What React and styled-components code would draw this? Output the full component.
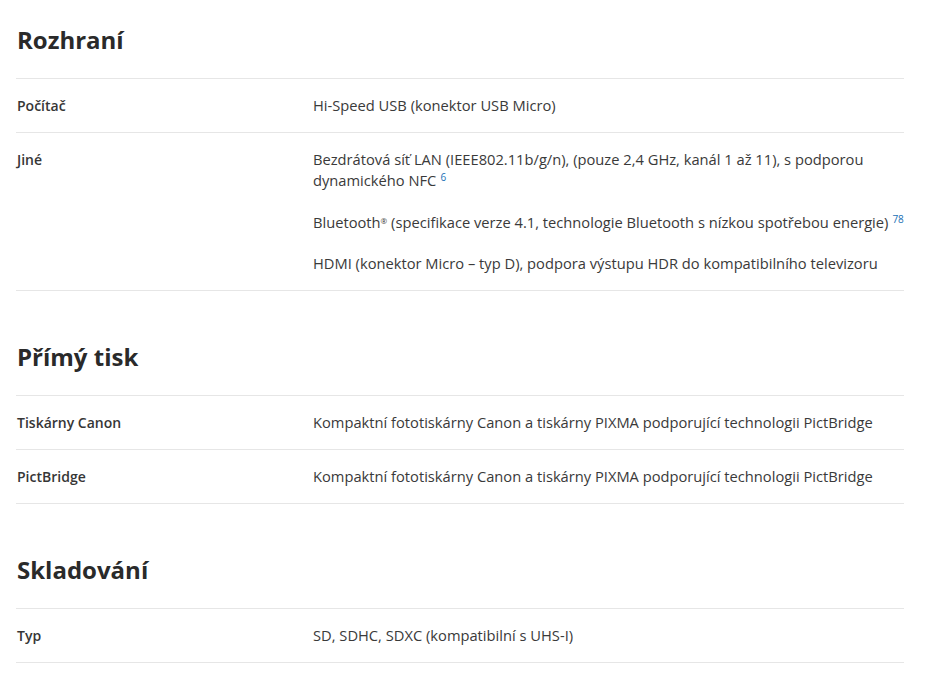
import styled, { createGlobalStyle } from 'styled-components';

const GlobalStyle = createGlobalStyle`
    body {
        margin: 0;
        background: #ffffff;
        font-family: "Open Sans", "Liberation Sans", sans-serif;
        color: #333333;
    }
`;

const sections = [
    {
        title: 'Rozhraní',
        rows: [
            { label: 'Počítač', values: [{ text: 'Hi-Speed USB (konektor USB Micro)' }] },
            {
                label: 'Jiné',
                values: [
                    { text: 'Bezdrátová síť LAN (IEEE802.11b/g/n), (pouze 2,4 GHz, kanál 1 až 11), s podporou dynamického NFC', note: '6' },
                    { text: 'Bluetooth', reg: true, rest: ' (specifikace verze 4.1, technologie Bluetooth s nízkou spotřebou energie)', note: '78' },
                    { text: 'HDMI (konektor Micro – typ D), podpora výstupu HDR do kompatibilního televizoru' },
                ],
            },
        ],
    },
    {
        title: 'Přímý tisk',
        rows: [
            { label: 'Tiskárny Canon', values: [{ text: 'Kompaktní fototiskárny Canon a tiskárny PIXMA podporující technologii PictBridge' }] },
            { label: 'PictBridge', values: [{ text: 'Kompaktní fototiskárny Canon a tiskárny PIXMA podporující technologii PictBridge' }] },
        ],
    },
    {
        title: 'Skladování',
        rows: [
            { label: 'Typ', values: [{ text: 'SD, SDHC, SDXC (kompatibilní s UHS-I)' }] },
        ],
    },
];

function App() {
    return (
        <>
            <GlobalStyle />
            <SPage>
                {sections.map((section) => (
                    <SSection key={section.title}>
                        <STitle>{section.title}</STitle>
                        <STable>
                            {section.rows.map((row) => (
                                <SRow key={row.label}>
                                    <SLabel>{row.label}</SLabel>
                                    <SValues>
                                        {row.values.map((value) => (
                                            <p key={value.text}>
                                                {value.text}
                                                {value.reg && <SReg>®</SReg>}
                                                {value.rest}
                                                {value.note && <SNote>{value.note}</SNote>}
                                            </p>
                                        ))}
                                    </SValues>
                                </SRow>
                            ))}
                        </STable>
                    </SSection>
                ))}
            </SPage>
        </>
    );
}

const SPage = styled.div`
    width: 888px;
    padding: 0 0 0 16px;
`;

const SSection = styled.section`
    & + & {
        padding-top: 26px;
    }
`;

const STitle = styled.h2`
    margin: 25px 0 23px 1px;
    font-size: 24px;
    line-height: 30px;
    font-weight: 700;
    color: #2a2a2a;
`;

const STable = styled.div`
    border-top: 1px solid #e6e6e6;
`;

const SRow = styled.div`
    display: grid;
    grid-template-columns: 296px 1fr;
    padding: 16px 0;
    border-bottom: 1px solid #e6e6e6;
    line-height: 21px;
`;

const SLabel = styled.div`
    padding-left: 1px;
    font-size: 14px;
    font-weight: 600;
    color: #363636;
`;

const SValues = styled.div`
    padding-left: 1px;
    font-size: 14.7px;
    color: #3a3a3a;

    p {
        margin: 0;
    }

    p + p {
        margin-top: 20.5px;
    }
`;

const SReg = styled.span`
    font-size: 8px;
    vertical-align: 4px;
    line-height: 0;
`;

const SNote = styled.span`
    margin-left: 4px;
    font-size: 10px;
    vertical-align: 5px;
    line-height: 0;
    color: #1a6fb5;
`;

export default App;
